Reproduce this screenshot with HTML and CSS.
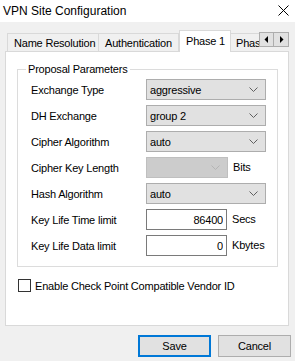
FILE: index.html
```html
<!DOCTYPE html>
<html lang="en">
<head>
  <meta charset="UTF-8">
  <meta name="viewport" content="width=device-width, initial-scale=1.0">
  <title>VPN Site Configuration</title>
  <link rel="stylesheet" href="styles.css">
</head>
<body>
  <div class="window">
    <div class="titlebar">
      <span class="title">VPN Site Configuration</span>
      <svg class="close" width="11" height="11" viewBox="0 0 11 11">
        <path d="M0.5 0.5 L10.5 10.5 M10.5 0.5 L0.5 10.5" stroke="#000" stroke-width="1" fill="none"/>
      </svg>
    </div>

    <div class="tabstrip">
      <div class="tab tab-name">Name Resolution</div>
      <div class="tab tab-auth">Authentication</div>
      <div class="tab active">Phase 1</div>
      <div class="tab tab-cut">Phase 2</div>
      <div class="scroller">
        <div class="scroll-btn">
          <svg width="5" height="7" viewBox="0 0 5 7"><path d="M4 0 L0.5 3.5 L4 7 Z" fill="#000"/></svg>
        </div>
        <div class="scroll-btn">
          <svg width="5" height="7" viewBox="0 0 5 7"><path d="M1 0 L4.5 3.5 L1 7 Z" fill="#000"/></svg>
        </div>
      </div>
    </div>

    <div class="panel">
      <fieldset class="group">
        <legend>Proposal Parameters</legend>
        <div class="form-grid">
          <label>Exchange Type</label>
          <div class="combo">
            <span>aggressive</span>
            <svg width="9" height="5" viewBox="0 0 9 5"><path d="M0.5 0.5 L4.5 4.5 L8.5 0.5" stroke="#606060" fill="none"/></svg>
          </div>

          <label>DH Exchange</label>
          <div class="combo">
            <span>group 2</span>
            <svg width="9" height="5" viewBox="0 0 9 5"><path d="M0.5 0.5 L4.5 4.5 L8.5 0.5" stroke="#606060" fill="none"/></svg>
          </div>

          <label>Cipher Algorithm</label>
          <div class="combo">
            <span>auto</span>
            <svg width="9" height="5" viewBox="0 0 9 5"><path d="M0.5 0.5 L4.5 4.5 L8.5 0.5" stroke="#606060" fill="none"/></svg>
          </div>

          <label>Cipher Key Length</label>
          <div class="with-unit">
            <div class="combo disabled">
              <span></span>
              <svg width="9" height="5" viewBox="0 0 9 5"><path d="M0.5 0.5 L4.5 4.5 L8.5 0.5" stroke="#b4b4b4" fill="none"/></svg>
            </div>
            <span class="unit">Bits</span>
          </div>

          <label>Hash Algorithm</label>
          <div class="combo">
            <span>auto</span>
            <svg width="9" height="5" viewBox="0 0 9 5"><path d="M0.5 0.5 L4.5 4.5 L8.5 0.5" stroke="#606060" fill="none"/></svg>
          </div>

          <label>Key Life Time limit</label>
          <div class="with-unit">
            <input class="textbox" type="text" value="86400">
            <span class="unit">Secs</span>
          </div>

          <label>Key Life Data limit</label>
          <div class="with-unit">
            <input class="textbox" type="text" value="0">
            <span class="unit">Kbytes</span>
          </div>
        </div>
      </fieldset>

      <div class="check-row">
        <span class="checkbox"></span>
        <span>Enable Check Point Compatible Vendor ID</span>
      </div>
    </div>

    <div class="buttons">
      <button class="btn default">Save</button>
      <button class="btn">Cancel</button>
    </div>
  </div>
</body>
</html>
```

FILE: styles.css
```css
* {
  box-sizing: border-box;
}
body {
  margin: 0;
  padding: 0;
  background: #f0f0f0;
  font-family: "Liberation Sans", Arial, sans-serif;
  font-size: 11px;
  letter-spacing: -0.2px;
  color: #000;
}
.window {
  width: 295px;
  height: 361px;
  display: flex;
  flex-direction: column;
  overflow: hidden;
}
.titlebar {
  height: 22px;
  background: #fff;
  display: flex;
  align-items: center;
  justify-content: space-between;
  padding: 0 6px 1px 3px;
}
.title {
  font-size: 12px;
  letter-spacing: 0;
}
.tabstrip {
  height: 29px;
  display: flex;
  align-items: flex-end;
  padding: 0 6px 0 7px;
}
.tab {
  height: 18px;
  border: 1px solid #d9d9d9;
  border-bottom: none;
  background: #f0f0f0;
  display: flex;
  align-items: center;
  padding: 0 6px;
  white-space: nowrap;
}
.tab-name {
  width: 92px;
}
.tab-auth {
  width: 80px;
  border-left: none;
}
.tab.active {
  width: 52px;
  height: 22px;
  margin-bottom: -1px;
  background: #fff;
  padding-bottom: 2px;
  position: relative;
  z-index: 1;
}
.tab-cut {
  width: 28px;
  border-left: none;
  border-right: none;
  overflow: hidden;
  padding: 0 0 0 5px;
}
.scroller {
  display: flex;
  align-self: flex-start;
  margin-top: 10px;
}
.scroll-btn {
  width: 15px;
  height: 15px;
  background: #e1e1e1;
  border: 1px solid #adadad;
  display: flex;
  align-items: center;
  justify-content: center;
}
.scroll-btn + .scroll-btn {
  border-left: none;
}
.panel {
  margin-left: 5px;
  width: 284px;
  height: 275px;
  background: #fff;
  border: 1px solid #d9d9d9;
  padding: 0 10px 0 11px;
}
.group {
  margin: 11px 0 0 0;
  padding: 3px 10px 10px 13px;
  border: 1px solid #dcdcdc;
  min-width: 0;
}
.group legend {
  padding: 0 2px;
  margin-left: -5px;
  line-height: 13px;
}
.form-grid {
  display: grid;
  grid-template-columns: 115px 1fr;
  grid-auto-rows: 21px;
  row-gap: 5px;
  align-items: center;
}
.combo {
  height: 21px;
  width: 120px;
  background: #e1e1e1;
  border: 1px solid #adadad;
  display: flex;
  align-items: center;
  justify-content: space-between;
  padding: 0 7px 0 3px;
}
.combo.disabled {
  width: 82px;
  background: #cccccc;
  border-color: #bfbfbf;
}
.with-unit {
  display: flex;
  align-items: center;
  gap: 5px;
}
.textbox {
  width: 81px;
  height: 21px;
  border: 1px solid #7a7a7a;
  background: #fff;
  font: inherit;
  letter-spacing: inherit;
  text-align: right;
  padding: 0 3px;
  margin: 0;
}
.unit {
  line-height: 13px;
}
.check-row {
  display: flex;
  align-items: center;
  gap: 4px;
  margin: 12px 0 0 1px;
}
.checkbox {
  width: 13px;
  height: 13px;
  border: 1px solid #333;
  background: #fff;
}
.buttons {
  display: flex;
  justify-content: flex-end;
  gap: 7px;
  padding: 9px 4px 0 0;
}
.btn {
  width: 73px;
  height: 22px;
  background: #e1e1e1;
  border: 1px solid #adadad;
  font: inherit;
  font-size: 11px;
  letter-spacing: inherit;
  color: #000;
  padding: 0;
  margin: 0;
}
.btn.default {
  border: 2px solid #0078d7;
}
```
